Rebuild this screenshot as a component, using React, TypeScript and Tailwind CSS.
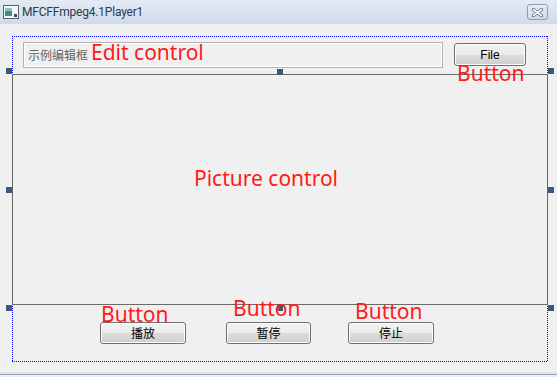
const Handle = ({ className }: { className: string }) => (
  <span className={`absolute w-[6px] h-[6px] bg-[#3d5878] ${className}`} />
)

const Label = ({ text, className }: { text: string; className: string }) => (
  <span className={`absolute text-[21px] leading-none text-[#ff1a1a] font-['Noto_Sans',sans-serif] whitespace-nowrap ${className}`}>
    {text}
  </span>
)

const WinButton = ({ children, className = '' }: { children: React.ReactNode; className?: string }) => (
  <div
    className={`flex items-center justify-center rounded-[3px] border border-[#707070] text-[12px] text-black shadow-[inset_0_0_0_1px_#fcfcfc] bg-[linear-gradient(to_bottom,#f2f2f2_0%,#ebebeb_50%,#dddddd_50%,#cfcfcf_100%)] ${className}`}
  >
    {children}
  </div>
)

export default function App() {
  return (
    <div className="relative w-[557px] h-[377px] flex flex-col bg-[#f0f0f0] overflow-hidden font-['Noto_Sans','Noto_Sans_CJK_SC',sans-serif]">
      {/* title bar */}
      <div className="h-[24px] flex items-center pl-[3px] pr-[9px] bg-[linear-gradient(to_bottom,#e3eaf4,#cfdbea)]">
        <svg width="16" height="14" viewBox="0 0 16 14" className="shrink-0">
          <rect x="0.5" y="0.5" width="15" height="13" fill="#f4f6f8" stroke="#5b6470" />
          <rect x="2" y="3" width="7" height="8" fill="#3f8f7f" />
          <rect x="2" y="3" width="7" height="3" fill="#8fc3b5" />
          <rect x="11" y="9" width="3" height="3" fill="#3a4a5c" />
        </svg>
        <span className="ml-[3px] text-[12px] text-[#2c3a4c] font-['Roboto',sans-serif] tracking-[-0.2px]">MFCFFmpeg4.1Player1</span>
        <div className="ml-auto w-[21px] h-[16px] flex items-center justify-center rounded-[3px] border border-[#8d9cb2] bg-[linear-gradient(to_bottom,#e9eef5,#cdd7e4)]">
          <svg width="11" height="9" viewBox="0 0 11 9">
            <path d="M1.5 1.5 L9.5 7.5 M9.5 1.5 L1.5 7.5" stroke="#5e6a7a" strokeWidth="3.2" strokeLinecap="round" />
            <path d="M1.5 1.5 L9.5 7.5 M9.5 1.5 L1.5 7.5" stroke="#ffffff" strokeWidth="1.6" strokeLinecap="round" />
          </svg>
        </div>
      </div>

      {/* dialog body */}
      <div className="flex-1 pl-[12px] pt-[12px]">
        {/* dotted selection frame, 1px on / 1px off */}
        <div className="w-[536px] h-[326px] p-px flex flex-col bg-[#f0f0f0] [background-image:linear-gradient(90deg,#0000ff_50%,transparent_50%),linear-gradient(90deg,#0000ff_50%,transparent_50%),linear-gradient(#0000ff_50%,transparent_50%),linear-gradient(#0000ff_50%,transparent_50%)] [background-size:2px_1px,2px_1px,1px_2px,1px_2px] [background-position:0_0,0_100%,0_0,100%_0] [background-repeat:repeat-x,repeat-x,repeat-y,repeat-y]">
          <div className="flex items-start pl-[10px] pt-[5px]">
            <div className="w-[420px] h-[26px] flex items-center pl-[4px] border border-[#b3b3b3] shadow-[inset_0_0_0_1px_#ffffff] text-[12px] text-[#666666] font-['Noto_Sans_CJK_SC',sans-serif]">
              示例编辑框
            </div>
            <WinButton className="ml-[11px] mt-[1px] w-[72px] h-[23px] font-['Liberation_Sans',sans-serif]">File</WinButton>
          </div>

          <div className="relative mt-[6px] -ml-[1px] w-[536px] h-[231px] border border-[#6a6a6a] bg-[#f0f0f0]">
            <Handle className="-left-[7px] -top-[7px]" />
            <Handle className="left-[264px] -top-[6px]" />
            <Handle className="-right-[7px] -top-[7px]" />
            <Handle className="-left-[7px] top-[112px]" />
            <Handle className="-right-[7px] top-[112px]" />
            <Handle className="-left-[7px] -bottom-[7px]" />
            <Handle className="left-[264px] -bottom-[7px]" />
            <Handle className="-right-[7px] -bottom-[7px]" />
          </div>

          <div className="flex mt-[17px] pl-[87px] font-['Noto_Sans_CJK_SC',sans-serif]">
            <WinButton className="w-[86px] h-[22px]">播放</WinButton>
            <WinButton className="ml-[40px] w-[85px] h-[22px]">暂停</WinButton>
            <WinButton className="ml-[37px] w-[86px] h-[22px]">停止</WinButton>
          </div>
        </div>
      </div>

      {/* window bottom edge */}
      <div className="h-[2px] bg-[#dde5ef]" />
      <div className="h-[1px] bg-[#9aa3ae]" />
      <div className="h-[2px] bg-[#e8edf3]" />

      {/* annotation labels */}
      <Label text="Edit control" className="left-[91px] top-[42px]" />
      <Label text="Button" className="left-[457px] top-[63px]" />
      <Label text="Picture control" className="left-[194px] top-[168px]" />
      <Label text="Button" className="left-[101px] top-[304px]" />
      <Label text="Button" className="left-[233px] top-[298px]" />
      <Label text="Button" className="left-[355px] top-[301px]" />
    </div>
  )
}
